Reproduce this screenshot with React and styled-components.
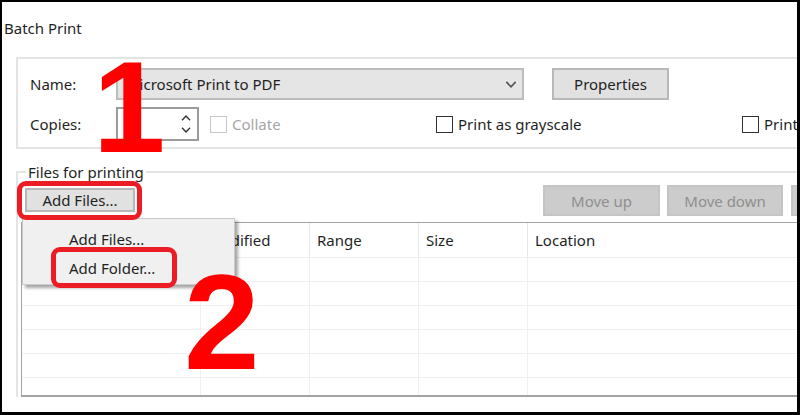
import styled, { createGlobalStyle } from "styled-components";

const GlobalStyle = createGlobalStyle`
  body {
    margin: 0;
    background: #fff;
  }
`;

const columns = ["File Name", "Modified", "Range", "Size", "Location"];
const rows = [1, 2, 3, 4, 5, 6];

const Chevron = ({ up, width = 10, height = 6, color = "#333" }) => (
  <svg width={width} height={height} viewBox="0 0 10 6">
    <path
      d={up ? "M1 5.2 L5 1 L9 5.2" : "M1 0.8 L5 5 L9 0.8"}
      fill="none"
      stroke={color}
      strokeWidth="1.4"
    />
  </svg>
);

const App = () => {
  return (
    <>
      <GlobalStyle />
      <Frame>
        <Title>Batch Print</Title>

        <GroupBox>
          <Row>
            <Label>Name:</Label>
            <Combo>
              <ComboText>Microsoft Print to PDF</ComboText>
              <Chevron width={12} height={7} color="#555" />
            </Combo>
            <Button $w={117} $ml={28}>
              Properties
            </Button>
          </Row>
          <Row>
            <Label>Copies:</Label>
            <Spinner>
              <SpinArrows>
                <Chevron up />
                <Chevron />
              </SpinArrows>
            </Spinner>
            <CheckItem $w={226} $ml={11} $disabled>
              <Box $disabled />
              Collate
            </CheckItem>
            <CheckItem $w={306}>
              <Box />
              Print as grayscale
            </CheckItem>
            <CheckItem $w={200}>
              <Box />
              Print on both sides
            </CheckItem>
          </Row>
        </GroupBox>

        <FilesGroup>
          <Legend>Files for printing</Legend>
          <ButtonRow>
            <Button $w={110} $h={24} $mt={3}>
              Add Files...
            </Button>
            <Button $w={117} $h={31} $ml={408} $disabled>
              Move up
            </Button>
            <Button $w={116} $h={31} $ml={7} $disabled>
              Move down
            </Button>
            <Button $w={116} $h={31} $ml={8} $disabled>
              Remove
            </Button>
          </ButtonRow>
          <Table>
            <HeaderRow>
              {columns.map((c) => (
                <HeaderCell key={c}>{c}</HeaderCell>
              ))}
            </HeaderRow>
            {rows.map((r) => (
              <BodyRow key={r}>
                {columns.map((c) => (
                  <BodyCell key={c} />
                ))}
              </BodyRow>
            ))}
          </Table>
        </FilesGroup>

        <Menu>
          <MenuItem>Add Files...</MenuItem>
          <MenuItem>Add Folder...</MenuItem>
          <Mark $x={28} $y={28} $w={126} $h={41} />
        </Menu>

        <Mark $x={15} $y={179} $w={125} $h={39} />
        <Digit $x={91} $y={40} $size={130}>1</Digit>
        <Digit $x={182} $y={252} $size={136}>2</Digit>
      </Frame>
    </>
  );
};

// Styled components
const Frame = styled.div`
  position: relative;
  width: 800px;
  height: 415px;
  box-sizing: border-box;
  border: solid #000;
  border-width: 2px 3px 3px 2px;
  background: #fff;
  overflow: hidden;
  font-family: "Noto Sans", "Open Sans", sans-serif;
  font-size: 15px;
  color: #1f1f1f;
`;

const Title = styled.div`
  margin: 16px 0 0 2px;
  height: 20px;
  line-height: 20px;
`;

const GroupBox = styled.div`
  margin: 19px 0 0 14px;
  width: 900px;
  border: 2px solid #e4e4e4;
  padding: 8px 0 6px 12px;
  display: flex;
  flex-direction: column;
  gap: 6px;
`;

const Row = styled.div`
  height: 34px;
  display: flex;
  align-items: center;
`;

const Label = styled.div`
  width: 86px;
  flex: none;
`;

const Combo = styled.div`
  width: 408px;
  height: 32px;
  box-sizing: border-box;
  flex: none;
  display: flex;
  align-items: center;
  justify-content: space-between;
  padding: 0 5px 0 8px;
  background: #e5e5e5;
  border: 2px solid #bdbdbd;
`;

const ComboText = styled.span``;

const Button = styled.div`
  width: ${(p) => p.$w}px;
  height: ${(p) => p.$h || 32}px;
  margin-left: ${(p) => p.$ml || 0}px;
  margin-top: ${(p) => p.$mt || 0}px;
  box-sizing: border-box;
  flex: none;
  display: flex;
  align-items: center;
  justify-content: center;
  background: ${(p) => (p.$disabled ? "#cccccc" : "#e1e1e1")};
  border: 2px solid ${(p) => (p.$disabled ? "#c4c4c4" : "#b8b8b8")};
  color: ${(p) => (p.$disabled ? "#8f8f8f" : "#1f1f1f")};
`;

const Spinner = styled.div`
  width: 83px;
  height: 34px;
  box-sizing: border-box;
  flex: none;
  display: flex;
  justify-content: flex-end;
  border: 2px solid #9c9c9c;
  background: #fff;
`;

const SpinArrows = styled.div`
  width: 22px;
  display: flex;
  flex-direction: column;
  align-items: center;
  justify-content: center;
  gap: 6px;
`;

const CheckItem = styled.div`
  width: ${(p) => p.$w}px;
  margin-left: ${(p) => p.$ml || 0}px;
  flex: none;
  display: flex;
  align-items: center;
  white-space: nowrap;
  color: ${(p) => (p.$disabled ? "#a6a6a6" : "#1f1f1f")};
`;

const Box = styled.span`
  width: 17px;
  height: 17px;
  box-sizing: border-box;
  margin-right: 5px;
  border: 1.5px solid ${(p) => (p.$disabled ? "#c8c8c8" : "#333")};
  background: #fff;
`;

const FilesGroup = styled.fieldset`
  margin: 13px 0 0 14px;
  width: 900px;
  min-width: 0;
  box-sizing: border-box;
  border: 2px solid #e4e4e4;
  border-bottom: none;
  padding: 0 0 0 3px;
`;

const Legend = styled.legend`
  margin-left: 5px;
  padding: 0 2px;
  line-height: 20px;
`;

const ButtonRow = styled.div`
  margin-top: 3px;
  padding-left: 4px;
  height: 31px;
  display: flex;
  align-items: flex-start;
`;

const Table = styled.div`
  margin-top: 6px;
  height: 175px;
  box-sizing: border-box;
  border: 1px solid #a3a3a3;
  border-bottom-width: 2px;
  overflow: hidden;
  background: #fff;
`;

const HeaderRow = styled.div`
  height: 34px;
  display: grid;
  grid-template-columns: 179px 109px 109px 109px 1fr;
  border-bottom: 1px solid #ededed;
`;

const HeaderCell = styled.div`
  display: flex;
  align-items: center;
  padding-left: 7px;
  border-right: 1px solid #e6e6e6;
`;

const BodyRow = styled.div`
  height: 23px;
  display: grid;
  grid-template-columns: 179px 109px 109px 109px 1fr;
  border-bottom: 1px solid #f0f0f0;
`;

const BodyCell = styled.div`
  border-right: 1px solid #f0f0f0;
`;

const Menu = styled.div`
  position: absolute;
  left: 20px;
  top: 216px;
  width: 213px;
  height: 67px;
  box-sizing: border-box;
  padding: 5px 0 2px;
  background: #f0f0f0;
  border: 1px solid #cacaca;
  box-shadow: 3px 3px 3px rgba(0, 0, 0, 0.35);
`;

const MenuItem = styled.div`
  height: 29px;
  display: flex;
  align-items: center;
  padding-left: 46px;
`;

const Mark = styled.div`
  position: absolute;
  left: ${(p) => p.$x}px;
  top: ${(p) => p.$y}px;
  width: ${(p) => p.$w}px;
  height: ${(p) => p.$h}px;
  box-sizing: border-box;
  border: 5px solid #ec1c24;
  border-radius: 9px;
`;

const Digit = styled.div`
  position: absolute;
  left: ${(p) => p.$x}px;
  top: ${(p) => p.$y}px;
  font-family: "Liberation Sans", Arial, sans-serif;
  font-weight: bold;
  font-size: ${(p) => p.$size}px;
  line-height: 1;
  color: #ff0000;
`;

export default App;
